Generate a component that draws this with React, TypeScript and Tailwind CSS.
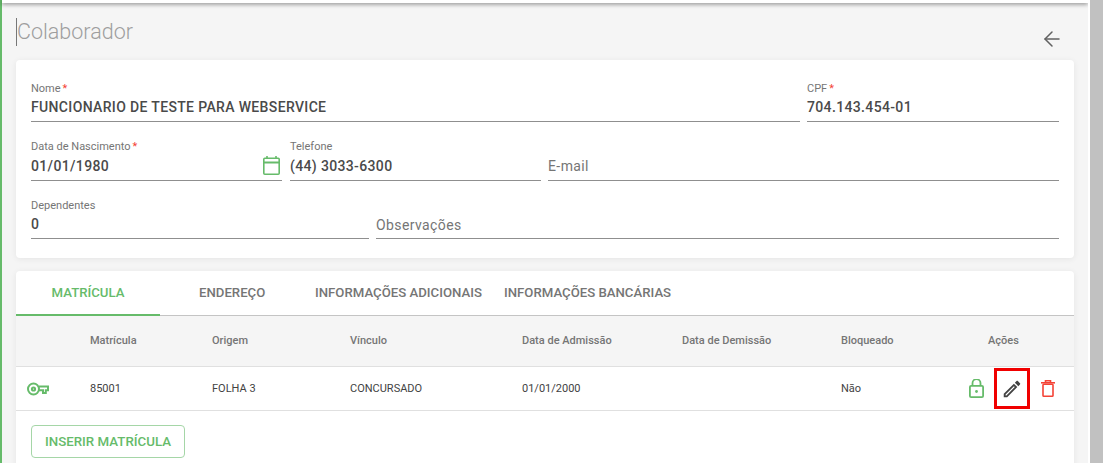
import React from 'react';
import { ArrowLeft } from 'lucide-react';

const Field = ({ label, value, required, low, className, children }: {
  label?: string;
  value?: string;
  required?: boolean;
  low?: boolean;
  className: string;
  children?: React.ReactNode;
}) => (
  <div className={`relative h-[42px] border-b border-[#8f8f8f] ${className}`}>
    {value ? (
      <>
        <div className={`h-[17px] text-[11px] leading-[14px] text-[#757575] ${low ? 'pt-[2px]' : 'pt-[1px]'}`}>
          {label}
          {required && <span className="ml-[2px] text-[#f44336]">*</span>}
        </div>
        <div className="text-[14px] leading-[20px] font-medium tracking-[0.35px] text-[#4a4a4a]">{value}</div>
      </>
    ) : (
      <div className={`text-[14px] leading-[20px] tracking-[0.4px] text-[#757575] ${low ? 'pt-[18px]' : 'pt-[17px]'}`}>{label}</div>
    )}
    {children}
  </div>
);

const tabs = ['ENDEREÇO', 'INFORMAÇÕES ADICIONAIS', 'INFORMAÇÕES BANCÁRIAS'];
const headers = ['Matrícula', 'Origem', 'Vínculo', 'Data de Admissão', 'Data de Demissão', 'Bloqueado'];
const cells = ['85001', 'FOLHA 3', 'CONCURSADO', '01/01/2000', '', 'Não'];
const gridCols = 'grid grid-cols-[74px_122px_138px_172px_160px_159px_110px_1fr] items-center';

const KeyIcon = () => (
  <svg width="22" height="14" viewBox="0 0 22 14" fill="none" stroke="#66bb6a" strokeWidth="2">
    <circle cx="6.5" cy="7" r="5.5" />
    <circle cx="6.5" cy="7" r="1.6" />
    <path d="M12 4.5h9v3.8h-2.2v2.7h-2.8v-2.7h-4" />
  </svg>
);

const CalendarIcon = () => (
  <svg width="17" height="19" viewBox="0 0 17 19" fill="none" stroke="#66bb6a" strokeWidth="1.6">
    <rect x="0.8" y="2.3" width="15.4" height="15.9" rx="1" />
    <path d="M0.8 6.5h15.4" strokeWidth="2" />
    <path d="M4 0v3M13 0v3" />
  </svg>
);

const LockIcon = () => (
  <svg width="15" height="19" viewBox="0 0 15 19" fill="none" stroke="#66bb6a" strokeWidth="1.8">
    <rect x="0.9" y="6.8" width="13.2" height="11.3" rx="1.2" />
    <path d="M3.5 6.8V4.2a4 4 0 0 1 8 0v2.6" />
    <circle cx="7.5" cy="12.5" r="1.4" fill="#66bb6a" stroke="none" />
  </svg>
);

const PencilIcon = () => (
  <svg width="22" height="22" viewBox="0 0 24 24" fill="#424242">
    <path d="M14.06 9L15 9.94 5.92 19H5v-.92L14.06 9M17.66 3c-.25 0-.51.1-.7.29l-1.83 1.83 3.75 3.75 1.83-1.83c.39-.39.39-1.04 0-1.41l-2.34-2.34c-.2-.2-.45-.29-.71-.29M14.06 6.19L3 17.25V21h3.75L17.81 9.94l-3.75-3.75z" />
  </svg>
);

const TrashIcon = () => (
  <svg width="14" height="17" viewBox="0 0 14 17" fill="none" stroke="#f44336" strokeWidth="1.6">
    <path d="M0 2.8h14" />
    <path d="M4.5 2.5V.8h5v1.7" />
    <rect x="2" y="4.3" width="10" height="11.9" rx="0.8" />
  </svg>
);

const App = () => {
  return (
    <div className="h-[463px] w-[1103px] overflow-hidden flex bg-[#f5f5f5] font-['Roboto',sans-serif]">
      <div className="w-[2px] shrink-0 bg-[#66bb6a]" />
      <div className="w-[1086px] shrink-0 h-full">
        <div className="h-[3px] bg-white shadow-[0_1px_4px_rgba(0,0,0,0.55)]" />
        <div className="px-[14px]">
          <div className="flex justify-between h-[57px]">
            <h1 className="mt-[15px] h-[28px] border-l border-[#777] text-[21.5px] leading-[27px] font-light text-[#9e9e9e]">
              Colaborador
            </h1>
            <ArrowLeft className="mt-[24px] mr-[10px] text-[#616161]" size={24} strokeWidth={1.5} />
          </div>

          <div className="h-[198px] rounded bg-white px-[15px] pt-[20px] shadow-[0_1px_6px_rgba(0,0,0,0.07)]">
            <div className="flex gap-[7px]">
              <Field low label="Nome" required value="FUNCIONARIO DE TESTE PARA WEBSERVICE" className="w-[769px]" />
              <Field low label="CPF" required value="704.143.454-01" className="w-[252px]" />
            </div>
            <div className="mt-[17px] flex gap-[7px]">
              <Field label="Data de Nascimento" required value="01/01/1980" className="w-[251px] mr-[1px]">
                <div className="absolute right-[2px] top-[17px]">
                  <CalendarIcon />
                </div>
              </Field>
              <Field label="Telefone" value="(44) 3033-6300" className="w-[251px]" />
              <Field label="E-mail" className="w-[511px]" />
            </div>
            <div className="mt-[16px] flex gap-[7px]">
              <Field low label="Dependentes" value="0" className="w-[338px]" />
              <Field low label="Observações" className="w-[683px]" />
            </div>
          </div>

          <div className="mt-[13px] h-[200px] rounded-t bg-white shadow-[0_1px_6px_rgba(0,0,0,0.07)]">
            <div className="flex h-[45px] border-b border-[#c4c4c4] text-[13.2px] font-medium">
              <div className="w-[144px] h-[45px] border-b-2 border-[#66bb6a] pt-[12px] text-center text-[#66bb6a]">MATRÍCULA</div>
              {tabs.map((tab, i) => (
                <div
                  key={tab}
                  className={`pt-[12px] text-[#757575] ${i === 0 ? 'ml-[39px] w-[116px]' : i === 1 ? 'w-[189px]' : ''}`}
                >
                  {tab}
                </div>
              ))}
            </div>
            <div className={`${gridCols} h-[50px] bg-[#f5f5f5] text-[11px] font-medium text-[#757575]`}>
              <div />
              {headers.map((h) => (
                <div key={h}>{h}</div>
              ))}
              <div className="pr-[18px] text-center">Ações</div>
            </div>
            <div className={`${gridCols} h-[45px] border-y border-[#e0e0e0] text-[11px] text-[#424242]`}>
              <div className="pl-[11px] pt-[1px]">
                <KeyIcon />
              </div>
              {cells.map((c, i) => (
                <div key={i} className="pt-[2px]">{c}</div>
              ))}
              <div className="flex items-center pl-[18px]">
                <LockIcon />
                <div className="ml-[10px] flex h-[41px] w-[36px] items-center justify-center border-[3px] border-[#f00000]">
                  <PencilIcon />
                </div>
                <div className="ml-[11px]">
                  <TrashIcon />
                </div>
              </div>
            </div>
            <div className="pl-[15px] pt-[14px]">
              <button className="h-[33px] w-[154px] rounded border border-[#a5d6a7] text-[13.3px] font-medium text-[#66bb6a]">
                INSERIR MATRÍCULA
              </button>
            </div>
          </div>
        </div>
      </div>
      <div className="w-[2px] shrink-0 bg-white" />
      <div className="flex-1 bg-[#c1c1c1]" />
    </div>
  );
};

export default App;
